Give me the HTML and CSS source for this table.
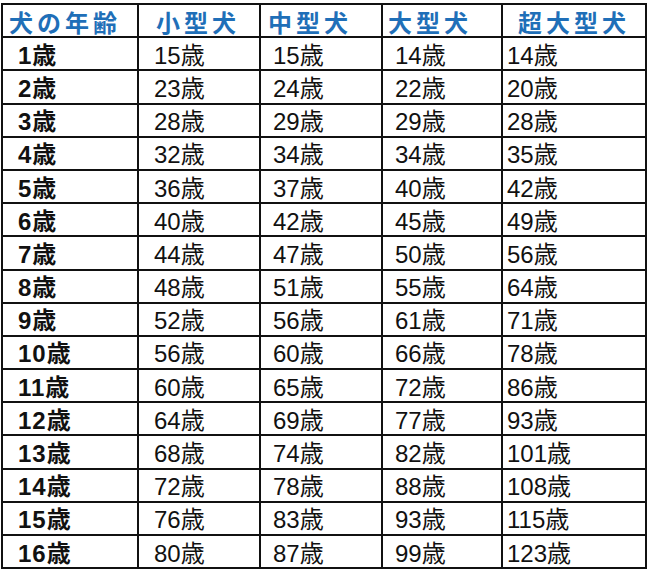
FILE: index.html
```html
<!DOCTYPE html>
<html lang="ja">
<head>
<meta charset="utf-8">
<link rel="stylesheet" href="styles.css">
</head>
<body>
<table class="age">
<colgroup><col class="w1"><col class="w2"><col class="w3"><col class="w4"><col class="w5"></colgroup>
<thead>
<tr><th class="h1">犬の年齢</th><th class="h2">小型犬</th><th class="h3">中型犬</th><th class="h4">大型犬</th><th class="h5">超大型犬</th></tr>
</thead>
<tbody>
<tr><td class="c1">1歳</td><td class="c2">15歳</td><td class="c3">15歳</td><td class="c4">14歳</td><td class="c5">14歳</td></tr>
<tr><td class="c1">2歳</td><td class="c2">23歳</td><td class="c3">24歳</td><td class="c4">22歳</td><td class="c5">20歳</td></tr>
<tr><td class="c1">3歳</td><td class="c2">28歳</td><td class="c3">29歳</td><td class="c4">29歳</td><td class="c5">28歳</td></tr>
<tr><td class="c1">4歳</td><td class="c2">32歳</td><td class="c3">34歳</td><td class="c4">34歳</td><td class="c5">35歳</td></tr>
<tr><td class="c1">5歳</td><td class="c2">36歳</td><td class="c3">37歳</td><td class="c4">40歳</td><td class="c5">42歳</td></tr>
<tr><td class="c1">6歳</td><td class="c2">40歳</td><td class="c3">42歳</td><td class="c4">45歳</td><td class="c5">49歳</td></tr>
<tr><td class="c1">7歳</td><td class="c2">44歳</td><td class="c3">47歳</td><td class="c4">50歳</td><td class="c5">56歳</td></tr>
<tr><td class="c1">8歳</td><td class="c2">48歳</td><td class="c3">51歳</td><td class="c4">55歳</td><td class="c5">64歳</td></tr>
<tr><td class="c1">9歳</td><td class="c2">52歳</td><td class="c3">56歳</td><td class="c4">61歳</td><td class="c5">71歳</td></tr>
<tr><td class="c1">10歳</td><td class="c2">56歳</td><td class="c3">60歳</td><td class="c4">66歳</td><td class="c5">78歳</td></tr>
<tr><td class="c1">11歳</td><td class="c2">60歳</td><td class="c3">65歳</td><td class="c4">72歳</td><td class="c5">86歳</td></tr>
<tr><td class="c1">12歳</td><td class="c2">64歳</td><td class="c3">69歳</td><td class="c4">77歳</td><td class="c5">93歳</td></tr>
<tr><td class="c1">13歳</td><td class="c2">68歳</td><td class="c3">74歳</td><td class="c4">82歳</td><td class="c5">101歳</td></tr>
<tr><td class="c1">14歳</td><td class="c2">72歳</td><td class="c3">78歳</td><td class="c4">88歳</td><td class="c5">108歳</td></tr>
<tr><td class="c1">15歳</td><td class="c2">76歳</td><td class="c3">83歳</td><td class="c4">93歳</td><td class="c5">115歳</td></tr>
<tr><td class="c1">16歳</td><td class="c2">80歳</td><td class="c3">87歳</td><td class="c4">99歳</td><td class="c5">123歳</td></tr>
</tbody>
</table>
</body>
</html>
```
FILE: styles.css
```css
html, body {
  margin: 0;
  padding: 0;
  background: #fff;
}
body {
  padding: 3px 0 0 1px;
}
.age {
  border-collapse: collapse;
  table-layout: fixed;
  width: 644px;
  font-family: "Liberation Sans", "Noto Sans CJK JP", sans-serif;
  font-size: 24px;
  color: #111;
}
.w1 { width: 136px; }
.w2 { width: 122px; }
.w3 { width: 122px; }
.w4 { width: 120px; }
.w5 { width: 144px; }
.age th, .age td {
  border: 2px solid #111;
  height: 33.2px;
  padding: 0;
  box-sizing: border-box;
  text-align: left;
  vertical-align: middle;
  line-height: 1;
  white-space: nowrap;
}
.age th {
  font-family: "Noto Sans CJK JP", sans-serif;
  font-weight: 700;
  color: #1f6fb8;
  font-size: 24px;
  letter-spacing: 4px;
  padding-top: 2px;
}
.age td {
  padding-top: 4px;
}
.age .h1 { padding-left: 6px; }
.age .h2 { padding-left: 17px; }
.age .h3 { padding-left: 7px; }
.age .h4 { padding-left: 5px; }
.age .h5 { padding-left: 15px; }
.age .c1 { padding-left: 15px; font-weight: 700; letter-spacing: 1px; }
.age .c2 { padding-left: 15px; }
.age .c3 { padding-left: 12px; }
.age .c4 { padding-left: 12px; }
.age .c5 { padding-left: 4px; }
```
